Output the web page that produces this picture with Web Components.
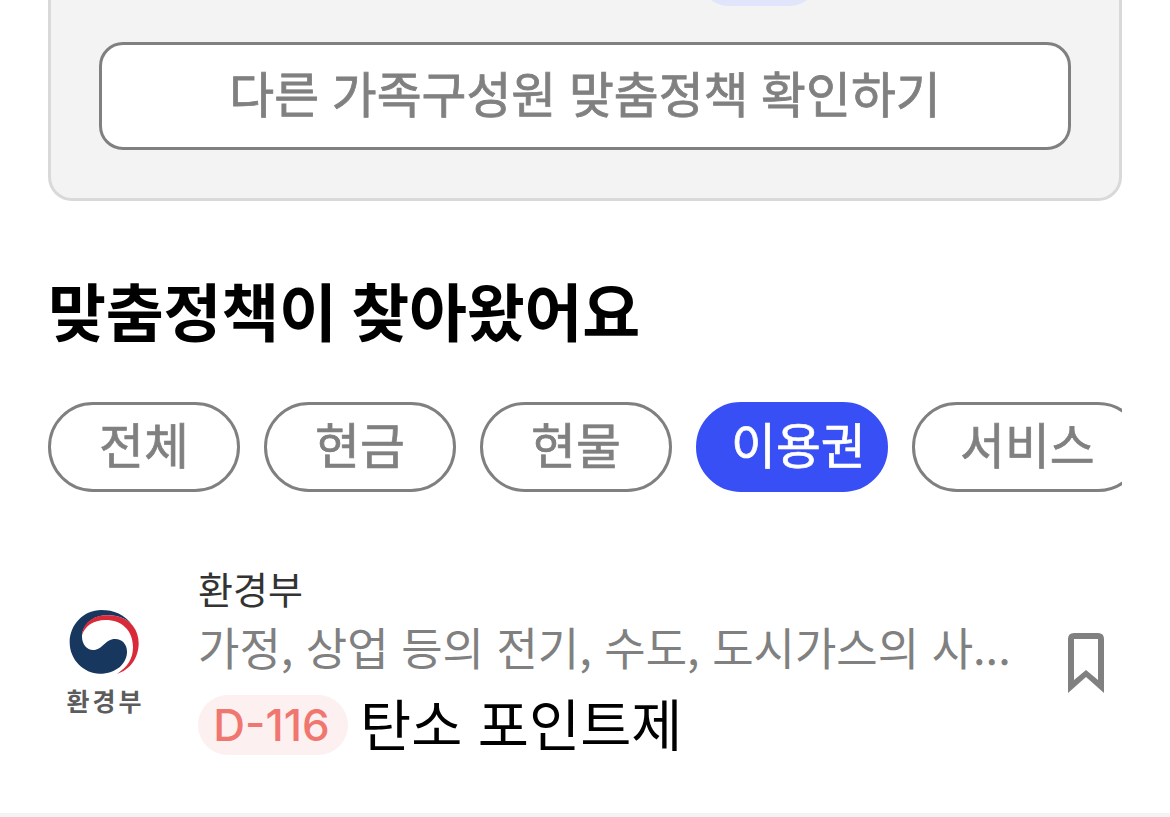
<!DOCTYPE html>
<html lang="ko">
<head>
<meta charset="utf-8">
<title>맞춤정책</title>
<style>
  body {
    margin: 0;
    overflow: hidden;
    background: #fff;
    font-family: "Noto Sans CJK KR", sans-serif;
  }
</style>
</head>
<body>
<policy-page>
  <family-card slot="card">다른 가족구성원 맞춤정책 확인하기</family-card>
  <span slot="heading">맞춤정책이 찾아왔어요</span>
  <filter-tab slot="tabs">전체</filter-tab>
  <filter-tab slot="tabs">현금</filter-tab>
  <filter-tab slot="tabs">현물</filter-tab>
  <filter-tab slot="tabs" active>이용권</filter-tab>
  <filter-tab slot="tabs" wide>서비스</filter-tab>
  <policy-item slot="items">
    <ministry-logo slot="logo">환경부</ministry-logo>
    <span slot="ministry">환경부</span>
    <span slot="summary">가정, 상업 등의 전기, 수도, 도시가스의 사...</span>
    <span slot="badge">D-116</span>
    <span slot="title">탄소 포인트제</span>
  </policy-item>
</policy-page>

<script>
(() => {
  const GRAY = '#808080';
  const ACTIVE_COLOR = '#384ff5';
  const CARD_COLOR = '#f3f3f3';

  class BaseElement extends HTMLElement {
    constructor() {
      super();
      this.attachShadow({ mode: 'open' });
      this.shadowRoot.innerHTML = `
        <style>*, :host { box-sizing: border-box; } ${this.styles}</style>
        ${this.markup}
      `;
    }
  }

  class PolicyPage extends BaseElement {
    get styles() {
      return `
        :host {
          display: block;
          height: 817px;
          overflow: hidden;
        }
        .content {
          margin: -54px 48px 0;
        }
        h1 {
          height: 90px;
          margin: 63px 0 48px;
          font-size: 63px;
          font-weight: 700;
          line-height: 90px;
          letter-spacing: -0.2px;
          word-spacing: -3px;
          white-space: nowrap;
        }
        .tabs {
          display: flex;
          gap: 24px;
          overflow: hidden;
        }
      `;
    }

    get markup() {
      return `
        <div class="content">
          <slot name="card"></slot>
          <h1><slot name="heading"></slot></h1>
          <nav class="tabs"><slot name="tabs"></slot></nav>
        </div>
        <slot name="items"></slot>
      `;
    }
  }

  class FamilyCard extends BaseElement {
    get styles() {
      return `
        :host {
          display: flex;
          flex-direction: column;
          height: 255px;
          padding: 0 48px;
          border: solid 3px #d9d9d9;
          border-top: none;
          border-radius: 0 0 24px 24px;
          background: ${CARD_COLOR};
        }
        .chip {
          width: 120px;
          height: 60px;
          margin: 0 0 36px 600px;
          border-radius: 30px;
          background: #e0e5fc;
        }
        button {
          height: 108px;
          padding: 0 0 9px;
          border: solid 3px ${GRAY};
          border-radius: 24px;
          color: ${GRAY};
          background: #fff;
          font: 400 48.8px/93px "Noto Sans CJK KR", sans-serif;
          -webkit-text-stroke: 0.8px ${GRAY};
          word-spacing: -1px;
          white-space: nowrap;
        }
      `;
    }

    get markup() {
      return `
        <div class="chip"></div>
        <button type="button"><slot></slot></button>
      `;
    }
  }

  class FilterTab extends BaseElement {
    get styles() {
      return `
        :host {
          flex: none;
          display: block;
          width: 192px;
          height: 90px;
          padding-left: 48px;
          border: solid 3px ${GRAY};
          border-radius: 45px;
          color: ${GRAY};
          font-size: 48.8px;
          font-weight: 400;
          -webkit-text-stroke: 0.7px currentColor;
          line-height: 76px;
          white-space: nowrap;
        }
        :host([active]) {
          padding-left: 32px;
          border-color: ${ACTIVE_COLOR};
          color: #fff;
          background: ${ACTIVE_COLOR};
        }
        :host([wide]) {
          width: 231px;
          padding-left: 45px;
        }
      `;
    }

    get markup() {
      return '<slot></slot>';
    }
  }

  class PolicyItem extends BaseElement {
    get styles() {
      return `
        :host {
          display: flex;
          align-items: flex-start;
          height: 325px;
          padding: 76px 64px 0 54px;
          border-bottom: solid 4px ${CARD_COLOR};
        }
        .logo {
          flex: none;
          width: 144px;
          padding-top: 40px;
        }
        .info {
          flex: 1;
          min-width: 0;
          white-space: nowrap;
        }
        .ministry {
          height: 46px;
          color: #333;
          font-size: 38px;
          line-height: 40px;
        }
        .summary {
          height: 65px;
          color: ${GRAY};
          font-size: 45px;
          line-height: 66px;
          word-spacing: -0.1px;
        }
        .title-row {
          display: flex;
          gap: 12px;
          margin-top: 16px;
        }
        .badge {
          width: 150px;
          height: 60px;
          padding-right: 3px;
          border-radius: 30px;
          color: #f07670;
          background: #fdf0f0;
          font: 500 44px/60px Inter, sans-serif;
          text-align: center;
        }
        .title {
          font-size: 55.6px;
          line-height: 54px;
        }
        .bookmark {
          flex: none;
          width: 40px;
          height: 60px;
          margin-top: 65px;
        }
      `;
    }

    get markup() {
      return `
        <div class="logo"><slot name="logo"></slot></div>
        <div class="info">
          <div class="ministry"><slot name="ministry"></slot></div>
          <div class="summary"><slot name="summary"></slot></div>
          <div class="title-row">
            <div class="badge"><slot name="badge"></slot></div>
            <div class="title"><slot name="title"></slot></div>
          </div>
        </div>
        <svg class="bookmark" viewBox="0 0 40 60">
          <path fill="${GRAY}" fill-rule="evenodd" d="M8 0H32Q38 0 38 6V60L20 44L2 60V6Q2 0 8 0ZM8 6V47L20 37L32 47V6Z"/>
        </svg>
      `;
    }
  }

  class MinistryLogo extends BaseElement {
    get styles() {
      return `
        :host {
          display: flex;
          flex-direction: column;
          align-items: center;
          width: 100px;
          color: #5c5c5c;
          font-size: 25px;
          font-weight: 700;
          line-height: 36px;
        }
        svg {
          width: 72px;
          height: 68px;
          margin-bottom: 6px;
        }
        .name {
          margin-right: -3px;
          letter-spacing: 3px;
        }
      `;
    }

    get markup() {
      return `
        <svg viewBox="55 54 216 204">
          <path fill="#17375e" d="M250 108C225 72 192 60 155 60C103 60 60 103 60 157C60 210 103 251 150 251C200 251 232 220 232 185C232 163 217 147 197 147C165 147 160 180 130 180C112 180 97 162 97 140C97 105 130 76 170 76C205 74 235 88 250 108Z"/>
          <path fill="#d92a3a" d="M97 135C100 100 130 76 170 76C205 74 235 88 250 108C261 122 267 141 267 160C267 205 240 240 202 252C235 230 250 205 250 172C250 120 215 90 168 90C130 90 105 110 97 135Z"/>
        </svg>
        <span class="name"><slot></slot></span>
      `;
    }
  }

  window.customElements.define('policy-page', PolicyPage);
  window.customElements.define('family-card', FamilyCard);
  window.customElements.define('filter-tab', FilterTab);
  window.customElements.define('policy-item', PolicyItem);
  window.customElements.define('ministry-logo', MinistryLogo);
})();
</script>
</body>
</html>
